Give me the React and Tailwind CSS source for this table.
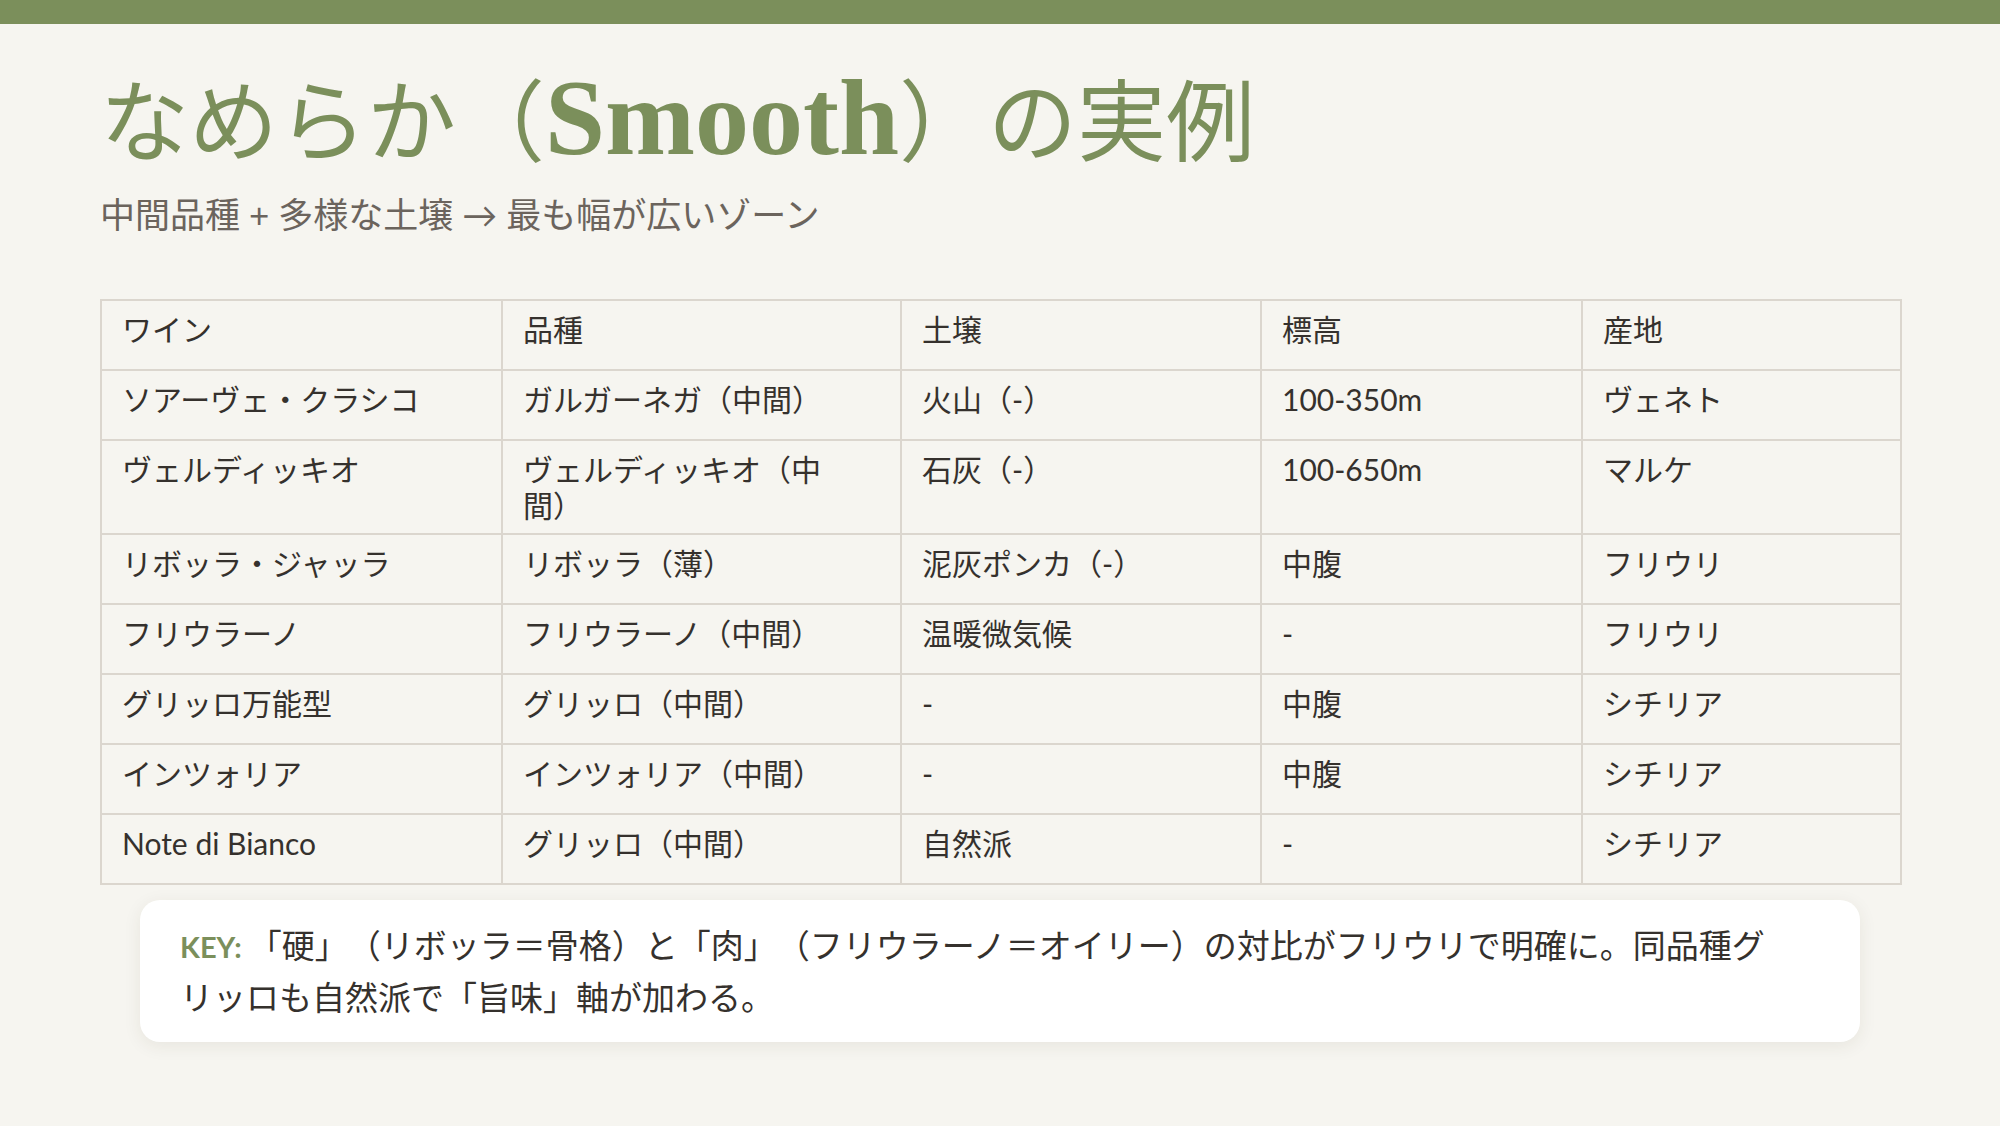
const rows = [
  ['ソアーヴェ・クラシコ', 'ガルガーネガ（中間）', '火山（-）', '100-350m', 'ヴェネト'],
  ['ヴェルディッキオ', 'ヴェルディッキオ（中間）', '石灰（-）', '100-650m', 'マルケ'],
  ['リボッラ・ジャッラ', 'リボッラ（薄）', '泥灰ポンカ（-）', '中腹', 'フリウリ'],
  ['フリウラーノ', 'フリウラーノ（中間）', '温暖微気候', '-', 'フリウリ'],
  ['グリッロ万能型', 'グリッロ（中間）', '-', '中腹', 'シチリア'],
  ['インツォリア', 'インツォリア（中間）', '-', '中腹', 'シチリア'],
  ['Note di Bianco', 'グリッロ（中間）', '自然派', '-', 'シチリア'],
]

const head = ['ワイン', '品種', '土壌', '標高', '産地']

function Cell({ children }) {
  return (
    <td className="h-[70px] border-2 border-[#dbd6ce] py-[10px] pl-5 pr-12 align-top">{children}</td>
  )
}

export default function App() {
  return (
    <div className="min-h-screen bg-[#f6f5f0] font-['Lato','Noto_Sans_CJK_JP',sans-serif] [text-spacing-trim:space-all]">
      <div className="h-6 bg-[#7b8f5b]" />

      <div className="px-[100px] pt-[42px]">
        <h1 className="font-['Liberation_Serif','Noto_Sans_CJK_JP',serif] text-[89px] leading-[104px] font-normal text-[#7b8f5b]">
          なめらか（<span className="text-[108px] font-bold">Smooth</span>）の実例
        </h1>

        <p className="mt-[14px] text-[35px] leading-[48px] text-[#6b645d]">
          中間品種 + 多様な土壌 → 最も幅が広いゾーン
        </p>

        <table className="mt-[61px] w-full table-fixed border-collapse text-[30px] leading-[36px] text-[#35312d]">
          <colgroup>
            <col className="w-[401px]" />
            <col className="w-[399px]" />
            <col className="w-[360px]" />
            <col className="w-[321px]" />
            <col className="w-[319px]" />
          </colgroup>
          <thead>
            <tr>
              {head.map((h) => (
                <th key={h} className="h-[70px] border-2 border-[#dbd6ce] py-[10px] pl-5 pr-12 text-left align-top font-normal">
                  {h}
                </th>
              ))}
            </tr>
          </thead>
          <tbody>
            {rows.map((r) => (
              <tr key={r[0]}>
                {r.map((c, i) => (
                  <Cell key={i}>{c}</Cell>
                ))}
              </tr>
            ))}
          </tbody>
        </table>

        <div className="mx-10 mt-[15px] rounded-[20px] bg-white py-5 pl-10 pr-[80px] text-[33px] leading-[50px] text-[#35312d] shadow-[0_4px_18px_rgba(60,50,30,0.08)]">
          <span className="text-[29px] font-bold text-[#7b8f5b]">KEY: </span>「硬」（リボッラ＝骨格）と「肉」（フリウラーノ＝オイリー）の対比がフリウリで明確に。同品種グリッロも自然派で「旨味」軸が加わる。
        </div>
      </div>
    </div>
  )
}
